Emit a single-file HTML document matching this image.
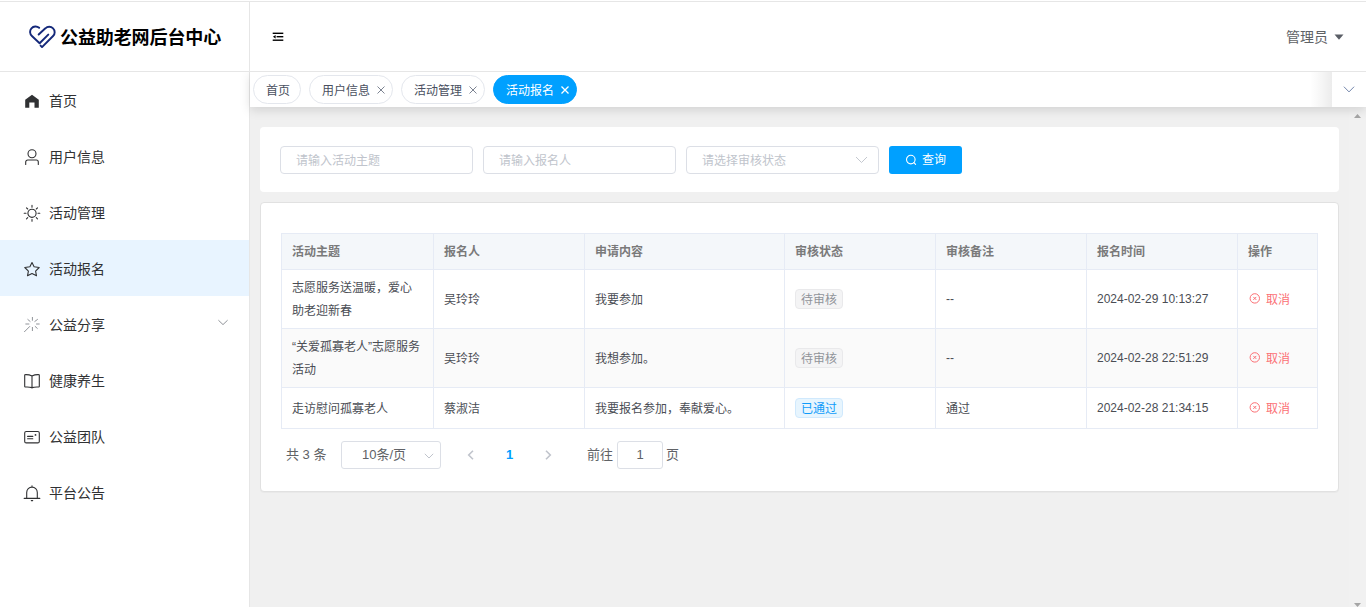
<!DOCTYPE html>
<html lang="zh-CN">
<head>
<meta charset="utf-8">
<title>公益助老网后台中心</title>
<style>
*{box-sizing:border-box;margin:0;padding:0}
html,body{width:1366px;height:607px;overflow:hidden;background:#fff}
body{font-family:"Liberation Sans","Noto Sans CJK SC",sans-serif;font-size:14px;color:#303133;position:relative}
.abs{position:absolute}
#topline{left:0;top:1px;width:1366px;height:1px;background:#e6e6e6}
#side{left:0;top:2px;width:250px;height:605px;background:#fff;border-right:1px solid #e6e6e6}
#logo{left:0;top:2px;width:249px;height:70px;border-bottom:1px solid #e6e6e6}
#logo svg{position:absolute;left:28.5px;top:22px}
#logo .t{position:absolute;left:60px;top:22px;font-size:18px;font-weight:bold;color:#000;line-height:28px;white-space:nowrap;letter-spacing:-0.1px}
.mi{position:absolute;left:0;width:249px;height:56px;line-height:56px;font-size:14px;color:#303133}
.mi .tx{position:absolute;left:49px;top:1px;white-space:nowrap}
.mi svg{position:absolute;left:23px;top:20px}
.mi.on{background:#e8f4ff}
#head{left:250px;top:2px;width:1116px;height:70px;background:#fff;border-bottom:1px solid #e6e6e6}
#tabs{left:250px;top:72px;width:1116px;height:35px;background:#fff;box-shadow:0 3px 10px 0 rgba(0,0,0,.13);clip-path:inset(0 0 -30px -30px)}
.tab{position:absolute;top:3px;height:29px;border:1px solid #e4e7ed;border-radius:15px;font-size:12px;line-height:31px;color:#495060;background:#fff;white-space:nowrap;padding-left:12px}
.tab.on{background:#00a0ff;border-color:#00a0ff;color:#fff}
.tab .x{position:absolute;right:7px;top:10px}
#main{left:250px;top:107px;width:1099px;height:500px;background:#f0f0f0}
#sb{left:1349px;top:107px;width:17px;height:500px;background:#f1f1f1}
.card{position:absolute;background:#fff;border-radius:4px}
.inp{position:absolute;height:28px;border:1px solid #dcdfe6;border-radius:4px;background:#fff;font-size:12px;color:#c0c4cc;line-height:28px;padding-left:15px;white-space:nowrap}
#btn{position:absolute;left:629px;top:19px;width:73px;height:28px;background:#00a0ff;border-radius:3px;color:#fff;font-size:12px;line-height:28px}
.tag{display:inline-block;height:20px;line-height:20px;padding:0 5px;border-radius:4px;font-size:12px;border:1px solid #e9e9eb;background:#f4f4f5;color:#909399;vertical-align:middle}
.tag.ok{border-color:#d0e9fd;background:#e7f5fe;color:#0f9bfa}
.op{color:#fb7075;white-space:nowrap}
#tb{position:absolute;left:20px;top:30px;width:1037px;border-left:1px solid #e6ebf5;border-top:1px solid #e6ebf5;font-size:12px;color:#4a4d54}
.tr{display:flex;background:#fff}
.tr.st{background:#fafafa}
.tr.th{background:#f4f7fa;color:#7a7a7a;font-weight:bold}
.td{flex:none;height:100%;border-right:1px solid #e6ebf5;border-bottom:1px solid #e6ebf5;padding:0 10px;display:flex;align-items:center;line-height:23px;white-space:nowrap}
.td>div{position:relative;top:1px}
.td>div.n{top:0}
.tr.th .td{padding-top:2px}
.op svg{vertical-align:-1px;margin-right:5px}
#pg{font-size:13px;color:#606266;line-height:22px;white-space:nowrap}
.pbox{height:28px;border:1px solid #dcdfe6;border-radius:3px;line-height:26px;font-size:13px;color:#606266;background:#fff}
</style>
</head>
<body>
<div class="abs" id="topline"></div>
<div class="abs" id="side"></div>
<div class="abs" id="logo">
<svg width="27" height="25" viewBox="0 0 28 26" fill="none" stroke="#14287a" stroke-width="2" stroke-linecap="round" stroke-linejoin="round"><path d="M10 11 L17 4.5 A5.6 5.6 0 0 1 25 12.5 L13.5 24 L12 22.5"/><path d="M20 11 L11 20 L3 12.5 A5.6 5.6 0 0 1 10.5 4"/></svg>
<div class="t">公益助老网后台中心</div>
</div>

<div class="mi" style="top:72px"><svg width="18" height="18" viewBox="0 0 18 18"><path d="M9 2.8 L15.8 7.7 V15.8 H11.5 V10.6 H6.3 V15.8 H2.2 V7.7 Z" fill="#303133"/></svg><span class="tx">首页</span></div>
<div class="mi" style="top:128px"><svg width="18" height="18" viewBox="0 0 18 18" fill="none" stroke="#303133" stroke-width="1.1" stroke-linecap="round" stroke-linejoin="round"><circle cx="9" cy="5.7" r="4"/><path d="M2.7 16.5 V14 A2 2 0 0 1 4.7 12 H13.3 A2 2 0 0 1 15.3 14 V16.5"/></svg><span class="tx">用户信息</span></div>
<div class="mi" style="top:184px"><svg width="18" height="18" viewBox="0 0 18 18" fill="none" stroke="#303133" stroke-width="1.1" stroke-linecap="round" stroke-linejoin="round"><circle cx="9" cy="9.3" r="4.1"/><path d="M9 1.4 V3.2 M9 15.4 V17.2 M1.2 9.3 H3 M15 9.3 H16.8 M3.5 3.8 L4.7 5 M14.5 3.8 L13.3 5 M3.5 14.8 L4.7 13.6 M14.5 14.8 L13.3 13.6"/></svg><span class="tx">活动管理</span></div>
<div class="mi on" style="top:240px"><svg width="18" height="18" viewBox="0 0 18 18" fill="none" stroke="#303133" stroke-width="1.1" stroke-linecap="round" stroke-linejoin="round"><path d="M9 2.6 L11.1 6.7 L16.2 7.5 L12.6 11.1 L13.5 15.8 L9 13.6 L4.5 15.8 L5.4 11.1 L1.8 7.5 L6.9 6.7 Z"/></svg><span class="tx">活动报名</span></div>
<div class="mi" style="top:296px"><svg width="18" height="18" viewBox="0 0 18 18" fill="none" stroke="#909399" stroke-width="1" stroke-linecap="butt"><path d="M9.4 1 V4.7 M9.4 11 V15 M2.4 8 H6.3 M13.1 8 H16.6 M4.5 3.2 L7.4 5.7 M11.5 5.7 L14.8 3.2 M11.9 10.2 L14.6 12.7 M7 10.2 L1.2 16"/></svg><span class="tx">公益分享</span><svg style="left:217px;top:23px" width="12" height="7" viewBox="0 0 12 7" fill="none" stroke="#909399" stroke-width="1"><path d="M1.4 1.2 L6 5.6 L10.6 1.2"/></svg></div>
<div class="mi" style="top:352px"><svg width="18" height="18" viewBox="0 0 18 18" fill="none" stroke="#303133" stroke-width="1.1" stroke-linecap="round" stroke-linejoin="round"><path d="M1.7 3.2 Q1.7 2.6 2.3 2.6 Q6 2.4 9 3.9 Q12 2.4 15.7 2.6 Q16.3 2.6 16.3 3.2 V14.4 Q16.3 15 15.7 15 Q12 14.7 9 15.6 Q6 14.7 2.3 15 Q1.7 15 1.7 14.4 Z M9 3.9 V15.9"/></svg><span class="tx">健康养生</span></div>
<div class="mi" style="top:408px"><svg width="18" height="18" viewBox="0 0 18 18" fill="none" stroke="#303133" stroke-width="1.1" stroke-linecap="round" stroke-linejoin="round"><rect x="1.7" y="3.5" width="14.6" height="11.4" rx="1.5"/><path d="M4.6 8.4 H9.8 M4.6 10.8 H9.8"/><circle cx="12.5" cy="6.9" r="0.9" fill="#303133" stroke="none"/></svg><span class="tx">公益团队</span></div>
<div class="mi" style="top:464px"><svg width="18" height="18" viewBox="0 0 18 18" fill="none" stroke="#303133" stroke-width="1.1" stroke-linecap="round" stroke-linejoin="round"><path d="M3.7 14.4 V8.4 A5.3 5.3 0 0 1 14.3 8.4 V14.4 M1.2 14.4 H16.8 M9 1.7 V2.9 M8.3 16.6 H9.7"/></svg><span class="tx">平台公告</span></div>

<div class="abs" id="head">
<svg class="abs" style="left:22px;top:29px" width="12" height="12" viewBox="0 0 12 12"><g fill="#000"><rect x="0.7" y="1.6" width="10.6" height="1.4"/><rect x="4.6" y="5" width="6.7" height="1.4"/><rect x="0.7" y="8.5" width="10.6" height="1.4"/><path d="M0.9 5.7 L3.6 3.9 L3.6 7.5 Z"/></g></svg>
<div class="abs" style="left:1036px;top:24px;font-size:14px;line-height:22px;color:#606266;white-space:nowrap">管理员</div>
<svg class="abs" style="left:1084px;top:32px" width="10" height="6" viewBox="0 0 10 6"><path d="M0.5 0.6 L9.5 0.6 L5 5.8 Z" fill="#5a5e66"/></svg>
</div>
<div class="abs" id="main">
<div class="card" id="c1" style="left:10px;top:20px;width:1079px;height:65px">
<div class="inp" style="left:20px;top:19px;width:193px">请输入活动主题</div>
<div class="inp" style="left:223px;top:19px;width:193px">请输入报名人</div>
<div class="inp" style="left:426px;top:19px;width:193px">请选择审核状态<svg class="abs" style="left:168px;top:9px" width="13" height="8" viewBox="0 0 13 8" fill="none" stroke="#c4c8cf" stroke-width="1"><path d="M1 1 L6.5 6.5 L12 1"/></svg></div>
<div id="btn"><svg class="abs" style="left:16px;top:8px" width="12" height="12" viewBox="0 0 12 12" fill="none" stroke="#fff" stroke-width="1.1"><circle cx="5.8" cy="5.6" r="4.3"/><path d="M8.9 8.7 L10.6 10.4" stroke-linecap="round"/></svg><span class="abs" style="left:33px;top:0">查询</span></div>
</div>
<div class="card" id="c2" style="left:10px;top:95px;width:1079px;height:290px;border:1px solid #e1e1e1;box-shadow:0 1px 1px rgba(0,0,0,.03)">
<div id="tb">
<div class="tr th" style="height:36px"><div class="td" style="width:152px">活动主题</div><div class="td" style="width:151px">报名人</div><div class="td" style="width:200px">申请内容</div><div class="td" style="width:151px">审核状态</div><div class="td" style="width:151px">审核备注</div><div class="td" style="width:151px">报名时间</div><div class="td" style="width:80px">操作</div></div>
<div class="tr" style="height:59px"><div class="td" style="width:152px"><div>志愿服务送温暖，爱心<br>助老迎新春</div></div><div class="td" style="width:151px"><div>吴玲玲</div></div><div class="td" style="width:200px"><div>我要参加</div></div><div class="td" style="width:151px"><div class="n"><span class="tag">待审核</span></div></div><div class="td" style="width:151px"><div class="n">--</div></div><div class="td" style="width:151px"><div class="n">2024-02-29 10:13:27</div></div><div class="td" style="width:80px"><div><span class="op"><svg width="13" height="12" viewBox="0 0 13 12" fill="none" stroke="#fb7075" stroke-width="1"><circle cx="6.8" cy="5.4" r="4.7"/><path d="M5.3 3.9 L8.3 6.9 M8.3 3.9 L5.3 6.9"/></svg>取消</span></div></div></div>
<div class="tr st" style="height:59px"><div class="td" style="width:152px"><div>“关爱孤寡老人”志愿服务<br>活动</div></div><div class="td" style="width:151px"><div>吴玲玲</div></div><div class="td" style="width:200px"><div>我想参加。</div></div><div class="td" style="width:151px"><div class="n"><span class="tag">待审核</span></div></div><div class="td" style="width:151px"><div class="n">--</div></div><div class="td" style="width:151px"><div class="n">2024-02-28 22:51:29</div></div><div class="td" style="width:80px"><div><span class="op"><svg width="13" height="12" viewBox="0 0 13 12" fill="none" stroke="#fb7075" stroke-width="1"><circle cx="6.8" cy="5.4" r="4.7"/><path d="M5.3 3.9 L8.3 6.9 M8.3 3.9 L5.3 6.9"/></svg>取消</span></div></div></div>
<div class="tr" style="height:41px"><div class="td" style="width:152px"><div>走访慰问孤寡老人</div></div><div class="td" style="width:151px"><div>蔡淑洁</div></div><div class="td" style="width:200px"><div>我要报名参加，奉献爱心。</div></div><div class="td" style="width:151px"><div class="n"><span class="tag ok">已通过</span></div></div><div class="td" style="width:151px"><div>通过</div></div><div class="td" style="width:151px"><div class="n">2024-02-28 21:34:15</div></div><div class="td" style="width:80px"><div><span class="op"><svg width="13" height="12" viewBox="0 0 13 12" fill="none" stroke="#fb7075" stroke-width="1"><circle cx="6.8" cy="5.4" r="4.7"/><path d="M5.3 3.9 L8.3 6.9 M8.3 3.9 L5.3 6.9"/></svg>取消</span></div></div></div>
</div>
<div id="pg">
<span class="abs" style="left:25px;top:241px">共 3 条</span>
<div class="abs pbox" style="left:80px;top:238px;width:100px"><span class="abs" style="left:20px;top:0">10条/页</span><svg class="abs" style="left:82px;top:11px" width="10" height="6" viewBox="0 0 10 6" fill="none" stroke="#c0c4cc" stroke-width="1"><path d="M0.8 0.8 L5 5 L9.2 0.8"/></svg></div>
<svg class="abs" style="left:206px;top:246px" width="8" height="12" viewBox="0 0 8 12" fill="none" stroke="#c0c4cc" stroke-width="1.6"><path d="M6 1.7 L1.7 6 L6 10.3"/></svg>
<span class="abs" style="left:245px;top:241px;font-weight:bold;color:#00a0ff">1</span>
<svg class="abs" style="left:283px;top:246px" width="8" height="12" viewBox="0 0 8 12" fill="none" stroke="#c0c4cc" stroke-width="1.6"><path d="M2 1.7 L6.3 6 L2 10.3"/></svg>
<span class="abs" style="left:326px;top:241px">前往</span>
<div class="abs pbox" style="left:356px;top:238px;width:46px;text-align:center">1</div>
<span class="abs" style="left:405px;top:241px">页</span>
</div>
</div>
</div>
<div class="abs" id="sb">
<svg class="abs" style="left:5px;top:7px" width="7" height="4" viewBox="0 0 7 4"><path d="M0 4 L3.5 0 L7 4 Z" fill="#a5a5a5"/></svg>
<svg class="abs" style="left:5px;top:496px" width="7" height="4" viewBox="0 0 7 4"><path d="M0 0 L3.5 4 L7 0 Z" fill="#a5a5a5"/></svg>
</div>
<div class="abs" id="tabs">
<div class="tab" style="left:3px;width:48px">首页</div>
<div class="tab" style="left:59px;width:84px">用户信息<svg class="x" width="8" height="8" viewBox="0 0 8 8" stroke="#7d8492" stroke-width="1"><path d="M0.5 0.5 L7.5 7.5 M7.5 0.5 L0.5 7.5"/></svg></div>
<div class="tab" style="left:151px;width:84px">活动管理<svg class="x" width="8" height="8" viewBox="0 0 8 8" stroke="#7d8492" stroke-width="1"><path d="M0.5 0.5 L7.5 7.5 M7.5 0.5 L0.5 7.5"/></svg></div>
<div class="tab on" style="left:243px;width:84px">活动报名<svg class="x" width="8" height="8" viewBox="0 0 8 8" stroke="#fff" stroke-width="1.3"><path d="M0.5 0.5 L7.5 7.5 M7.5 0.5 L0.5 7.5"/></svg></div>
<div class="abs" style="left:1060px;top:0;width:22px;height:35px;background:linear-gradient(to right,rgba(0,0,0,0),rgba(0,0,0,.025) 35%,rgba(0,0,0,.075))"></div><div class="abs" style="left:1082px;top:0;width:34px;height:35px;background:#fff"><svg class="abs" style="left:11px;top:13.5px" width="12" height="7" viewBox="0 0 12 7" fill="none" stroke="#6d80a6" stroke-width="0.95"><path d="M0.9 0.7 L6 5.9 L11.1 0.7"/></svg></div>
</div>
</body>
</html>
